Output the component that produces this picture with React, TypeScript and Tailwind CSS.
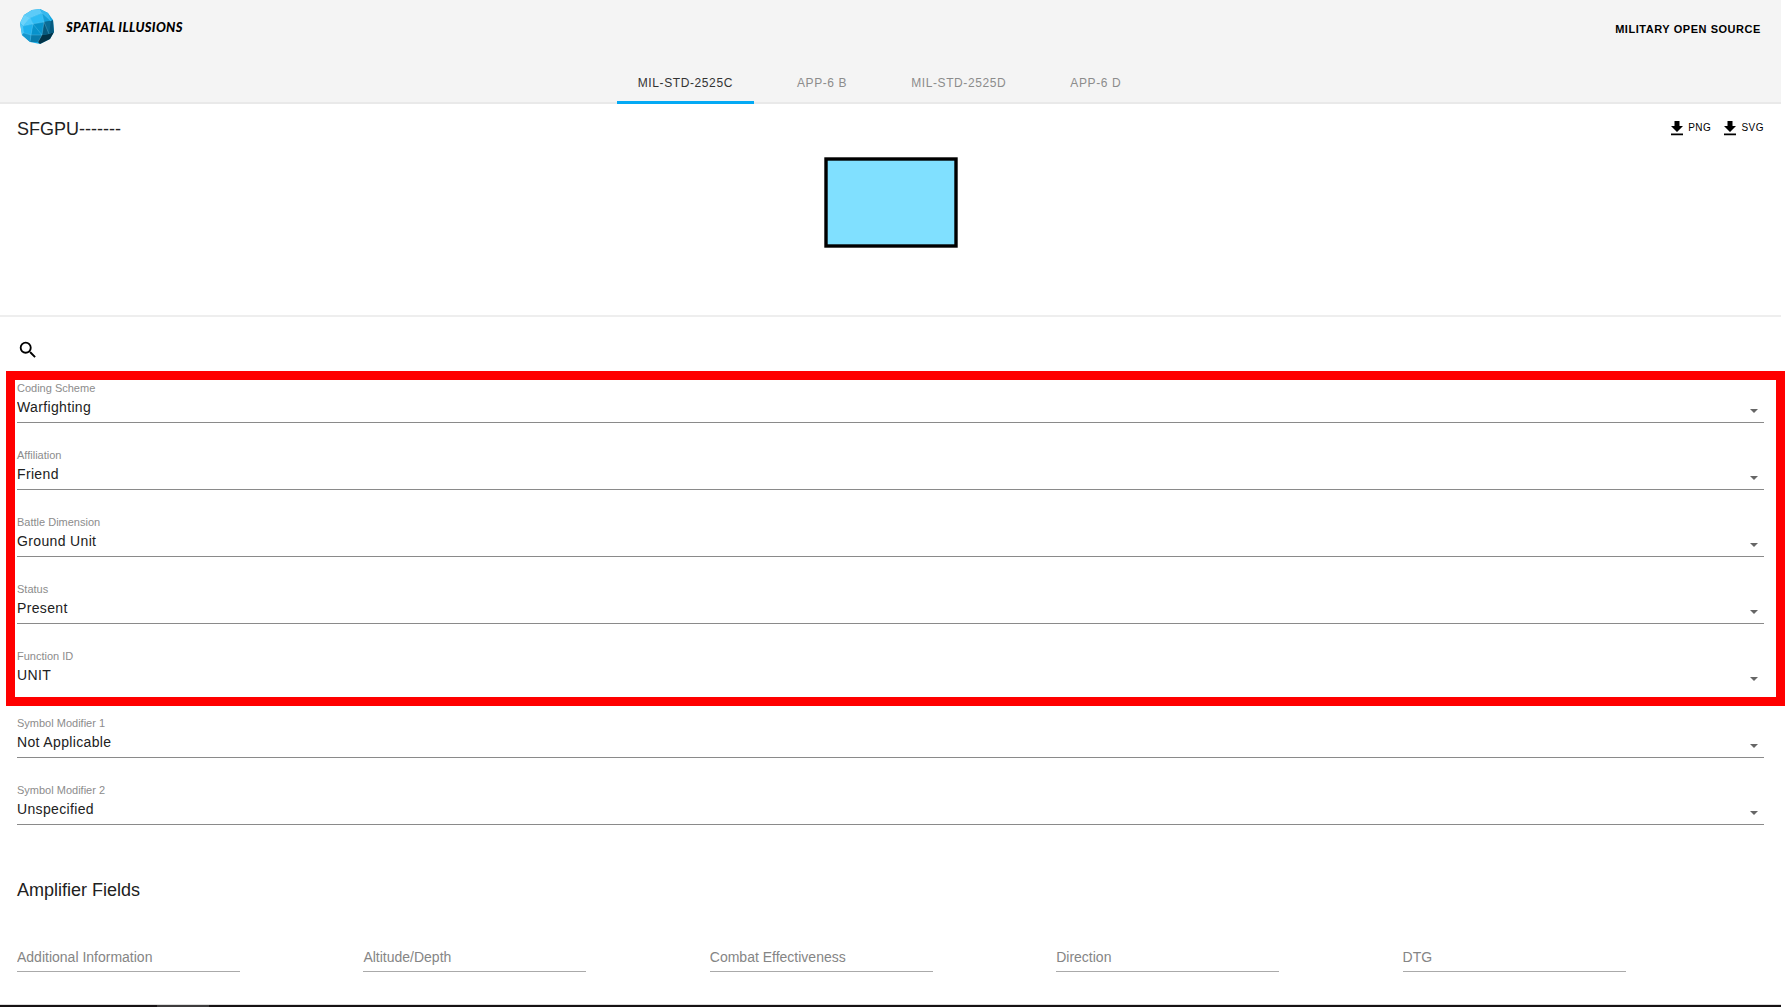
import React from "react";

const tabs = ["MIL-STD-2525C", "APP-6 B", "MIL-STD-2525D", "APP-6 D"];

const codeSelects = [
  { label: "Coding Scheme", value: "Warfighting" },
  { label: "Affiliation", value: "Friend" },
  { label: "Battle Dimension", value: "Ground Unit" },
  { label: "Status", value: "Present" },
  { label: "Function ID", value: "UNIT", plain: true },
];

const modifierSelects = [
  { label: "Symbol Modifier 1", value: "Not Applicable" },
  { label: "Symbol Modifier 2", value: "Unspecified" },
];

const amplifiers = ["Additional Information", "Altitude/Depth", "Combat Effectiveness", "Direction", "DTG"];

const toId = (s: string) => s.toLowerCase().replace(/[^a-z0-9]+/g, "-");

function Logo() {
  return (
    <svg viewBox="0 0 34 35" className="h-[35px] w-[34px]" aria-hidden="true">
      <path d="M12 1 20 0 28 4 33 11 34 23 30 30 20 35 10 33 2 26 0 14 4 6Z" fill="#14a6e0" />
      <path d="M12 1 20 0 22 4 10 9 4 6Z" fill="#5ccbf8" />
      <path d="M20 0 28 4 31 12 22 4Z" fill="#35b8ee" />
      <path d="M4 6 10 9 3 17 0 14Z" fill="#6ad3fb" />
      <path d="M10 9 22 4 24 13 13 15Z" fill="#2fbcf4" />
      <path d="M10 9 13 15 3 17Z" fill="#4bc8fa" />
      <path d="M22 4 31 12 24 13Z" fill="#139fd8" />
      <path d="M13 15 24 13 22 26 11 26Z" fill="#0792cb" />
      <path d="M3 17 13 15 11 26 4 24Z" fill="#1fb0ec" />
      <path d="M0 14 3 17 4 24 2 26Z" fill="#4cc6f6" />
      <path d="M24 13 31 12 33 11 34 23 29 25 22 26Z" fill="#075a7e" />
      <path d="M24 13 31 12 29 25Z" fill="#0a6d97" />
      <path d="M11 26 22 26 18 33 10 33Z" fill="#087bab" />
      <path d="M22 26 29 25 34 23 30 30 20 35 18 33Z" fill="#033246" />
      <path d="M4 24 11 26 10 33 2 26Z" fill="#1696cd" />
      <path
        d="M4 6 10 9 22 4 31 12M10 9 3 17 13 15ZM22 4 24 13 13 15M13 15 22 26M13 15 11 26 22 26 24 13 29 25M22 26 18 33M4 24 11 26 10 33"
        fill="none"
        stroke="#9fe2fa"
        strokeOpacity="0.4"
        strokeWidth="0.6"
      />
    </svg>
  );
}

function DownloadButton({ label }: { label: string }) {
  return (
    <button type="button" className="flex items-center gap-1 text-[10px] leading-4 tracking-wider text-black">
      <svg viewBox="0 0 14 16" className="h-4 w-[14px]" aria-hidden="true">
        <path d="M4.500 1h5v5h3.500L7 12 1 6h3.500ZM1 13.500h12v1.700H1Z" />
      </svg>
      {label}
    </button>
  );
}

function SelectField({ label, value, plain }: { label: string; value: string; plain?: boolean }) {
  const id = toId(label);
  return (
    <div className="h-[67px] pt-1">
      <label htmlFor={id} className="block text-[11px] leading-4 text-[#8c8c8c]">
        {label}
      </label>
      <div className={plain ? "relative border-b border-transparent" : "relative border-b border-[#8a8a8a]"}>
        <select
          id={id}
          className="block h-[26px] w-full appearance-none bg-transparent pb-[5px] text-sm leading-5 tracking-wide text-[#212121] outline-none"
        >
          <option>{value}</option>
        </select>
        <svg viewBox="0 0 8 4" className="pointer-events-none absolute right-[6px] bottom-[9px] h-1 w-2" aria-hidden="true">
          <path d="M0 0h8L4 4Z" fill="#666" />
        </svg>
      </div>
    </div>
  );
}

export default function App() {
  return (
    <div className="flex min-h-screen flex-col bg-white pr-1 font-['Liberation_Sans',Arial,sans-serif] text-[#212121]">
      <header className="border-b-2 border-[#e9e9e9] bg-[#f4f4f4]">
        <div className="flex h-[62px] items-start justify-between pt-[9px] pr-5 pl-5">
          <a href="#" className="flex items-center gap-3">
            <Logo />
            <span className="font-['Lato','Liberation_Sans',sans-serif] text-[13px] leading-5 font-black tracking-wide text-black italic">
              SPATIAL ILLUSIONS
            </span>
          </a>
          <a href="#" className="mt-[10px] text-[11px] leading-5 font-bold tracking-wider text-black">
            MILITARY OPEN SOURCE
          </a>
        </div>
        <nav className="-mb-[2px] flex h-[42px] justify-center" role="tablist">
          {tabs.map((tab, i) => (
            <button
              key={tab}
              type="button"
              role="tab"
              aria-selected={i === 0}
              className={
                i === 0
                  ? "mr-[22px] border-b-3 border-[#03a9f4] px-[21px] pt-[2px] text-xs tracking-wider text-[#333]"
                  : "mr-[22px] border-b-3 border-transparent px-[21px] pt-[2px] text-xs tracking-wider text-[#8c8c8c]"
              }
            >
              {tab}
            </button>
          ))}
        </nav>
      </header>

      <section className="h-[213px] border-b-2 border-[#eee] px-[17px] pt-[11px]">
        <div className="flex h-10 items-start justify-between">
          <h1 className="text-lg leading-7">SFGPU-------</h1>
          <div className="flex gap-3 pt-[5px]">
            <DownloadButton label="PNG" />
            <DownloadButton label="SVG" />
          </div>
        </div>
        <svg viewBox="0 0 134 91" className="mx-auto mt-[2px] h-[91px] w-[134px]" role="img" aria-label="Friendly ground unit symbol">
          <rect x="2" y="2" width="130" height="87" fill="#80e0ff" stroke="#000" strokeWidth="3.4" />
        </svg>
      </section>

      <main className="flex-1">
        <div className="px-[17px] pt-[22px]">
          <button type="button" aria-label="Search" className="flex size-[22px] items-center justify-center">
            <svg viewBox="0 0 24 24" className="size-[22px]" aria-hidden="true">
              <path d="M15.500 14h-.79l-.28-.27A6.470 6.470 0 0 0 16 9.500 6.500 6.500 0 1 0 9.500 16c1.610 0 3.090-.59 4.230-1.570l.27.28v.79l5 4.990L20.490 19l-4.990-5zm-6 0C7.010 14 5 11.990 5 9.500S7.010 5 9.500 5 14 7.010 14 9.500 11.990 14 9.500 14z" />
            </svg>
          </button>
        </div>
        <div className="relative mt-3 px-[17px]">
          <div className="pointer-events-none absolute -top-[2px] -right-1 left-[6px] z-10 h-[335px] border-9 border-[#f00]" />
          <div className="pt-[3px]">
            {codeSelects.map((f) => (
              <SelectField key={f.label} {...f} />
            ))}
            {modifierSelects.map((f) => (
              <SelectField key={f.label} {...f} />
            ))}
          </div>
        </div>
        <h2 className="mt-[31px] px-[17px] text-lg leading-7">Amplifier Fields</h2>
        <div className="mt-10 grid grid-cols-5 pr-8 pl-[17px]">
          {amplifiers.map((name) => (
            <input
              key={name}
              type="text"
              aria-label={name}
              placeholder={name}
              className="h-7 w-[223px] border-b border-[#aaa] pb-[2px] text-sm leading-5 outline-none placeholder:text-[#858585]"
            />
          ))}
        </div>
      </main>

      <footer className="flex h-[3px] border-t border-[#ddd] bg-[#161214]">
        <div className="ml-[157px] w-[52px] bg-[#3d3b3c]" />
      </footer>
    </div>
  );
}
